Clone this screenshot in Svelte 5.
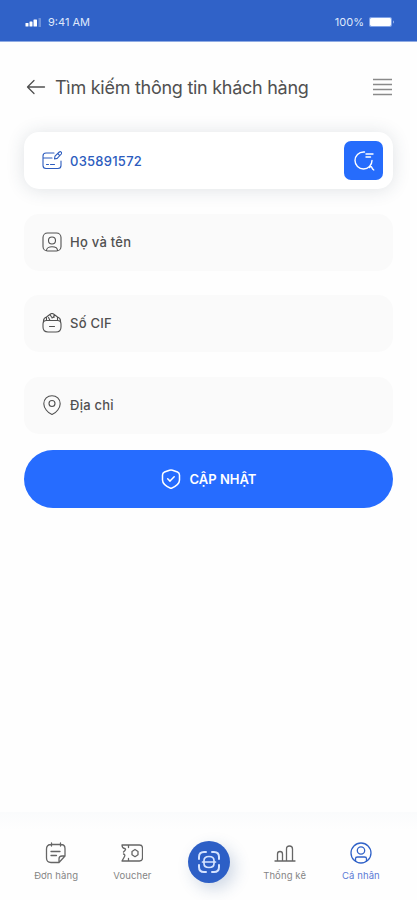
<script>
    let phone = '035891572';

    const fields = [
        { icon: 'user', label: 'Họ và tên' },
        { icon: 'bag', label: 'Số CIF' },
        { icon: 'pin', label: 'Địa chỉ' }
    ];

    const tabs = [
        { icon: 'order', label: 'Đơn hàng' },
        { icon: 'voucher', label: 'Voucher' },
        { icon: 'scan', label: '' },
        { icon: 'stats', label: 'Thống kê' },
        { icon: 'profile', label: 'Cá nhân', active: true }
    ];
</script>

<div class="screen">
    <div class="status-bar">
        <svg class="signal" viewBox="0 0 17 9">
            <rect x="0.5" y="5" width="3" height="3.5" rx="0.6" />
            <rect x="4.5" y="3.5" width="3" height="5" rx="0.6" />
            <rect x="8.5" y="1.5" width="3.5" height="7" rx="0.6" />
            <rect x="13.5" y="0" width="2.5" height="9" rx="0.6" opacity="0.3" />
        </svg>
        <span class="time">9:41 AM</span>
        <span class="percent">100%</span>
        <svg class="battery" viewBox="0 0 26 10">
            <rect x="0.5" y="0.5" width="22" height="9" rx="2" fill="#fff" stroke="#7fa2e8" />
            <path d="M24 3.5c1.200.4 1.200 2.600 0 3z" fill="#9db8ee" stroke="none" />
        </svg>
    </div>

    <header class="title-row">
        <svg class="back" viewBox="0 0 20 16">
            <path d="M18.500 8H2M8 1.500L1.500 8 8 14.500" />
        </svg>
        <h1>Tìm kiếm thông tin khách hàng</h1>
        <svg class="menu" viewBox="0 0 19 18">
            <path d="M0 1.500h19M0 6.500h19M0 11.500h19M0 16.500h19" />
        </svg>
    </header>

    <main>
        <div class="field search">
            <svg class="icon" viewBox="0 0 20 20">
                <path d="M12 2H4Q1 2 1 5v9.500q0 3 3 3h12q3 0 3-3V10M1 7h9M4.500 13.500h2M8.500 13.500h4" />
                <path d="M12.500 8l.5-2.800 4.300-4.200q1-.8 1.900.1t.1 1.900L15.200 7.400zM15.800 2.600l2 2" />
            </svg>
            <span class="text">{phone}</span>
            <button class="search-btn" aria-label="search">
                <svg viewBox="0 0 22 22">
                    <path d="M10.500 2A8.500 8.500 0 1 0 19 10.500M10.500 2h1M13 4h7M13 7h4.500" />
                    <path d="M16.500 17.500q1.500-2 2.500.2.400 1.500 1.800 2.300" />
                </svg>
            </button>
        </div>

        {#each fields as field}
            <div class="field">
                <svg class="icon" viewBox="0 0 20 20">
                    {#if field.icon === 'user'}
                        <rect x="1" y="1" width="18" height="18" rx="4.500" />
                        <circle cx="10" cy="8.500" r="3.500" />
                        <path d="M4.500 18.500c0-5 11-5 11 0" />
                    {:else if field.icon === 'bag'}
                        <path d="M4.500 7.500h11q3.500 0 3.500 3.500v3q0 5-5 5H6q-5 0-5-5v-3Q1 7.500 4.500 7.500zM7.500 13.500h5" />
                        <path d="M1.500 9q-.4-4 3-5L8.500 1q1.500-1 3 0l4 3q3.400 1 3 5M4.500 4.500v3M8 1.500L9.500 4M6.500 4.500l1.500 3M15.500 4.500v3M12 2v2.500M10 5l2-1.500" />
                    {:else}
                        <path d="M10 19.500C5.500 18 1.800 12.500 1.800 8.700 1.800 4 5.500.7 10 .7s8.200 3.300 8.200 8c0 3.800-3.700 9.300-8.200 10.800z" />
                        <circle cx="10" cy="8.500" r="3" />
                    {/if}
                </svg>
                <span class="text">{field.label}</span>
            </div>
        {/each}

        <button class="submit">
            <svg viewBox="0 0 20 20">
                <path d="M8.500 1.200L3.500 3Q1.500 3.800 1.500 6v5c0 4 5 7 8.500 8.500 3.500-1.500 8.500-4.500 8.500-8.500V6q0-2.200-2-3l-5-1.800q-1.500-.5-3 0z" />
                <path d="M6.700 9.800l2.300 2.300 4.200-4.300" />
            </svg>
            <span>CẬP NHẬT</span>
        </button>
    </main>

    <nav>
        {#each tabs as tab}
            {#if tab.icon === 'scan'}
                <button class="scan" aria-label="scan">
                    <svg viewBox="0 0 22 22">
                        <path class="corner" d="M1 8V6q0-5 5-5h2M14 1h2q5 0 5 5v2M21 14v2q0 5-5 5h-2M8 21H6q-5 0-5-5v-2" />
                        <path d="M6 9.500Q6 5.500 11 5.500t5 4v3q0 4-5 4t-5-4zM4.500 11h13" />
                    </svg>
                </button>
            {:else}
                <div class="tab" class:active={tab.active}>
                    <svg viewBox="0 0 22 22">
                        {#if tab.icon === 'order'}
                            <path d="M6 2.500h10q4 0 4 4V14l-6 6.500H6q-4.500 0-4.500-4.500V7Q1.500 2.500 6 2.500zM6.500 1v3M15.500 1v3M20 14h-3q-3 0-3 3v3.500M6 9.500h9M6 13.500h5.500" />
                        {:else if tab.icon === 'voucher'}
                            <path d="M1 3h17.500q3 0 3 3v10q0 3-3 3H1M1 3q0 3 2.500 3.500T2.500 10M2.500 12q2 .5 1 2.500T1 19M7.500 3v2.500M7.500 16.500V19" />
                            <path d="M11 9.500l3-2 3 2v3.200l-3 2-3-2z" />
                        {:else if tab.icon === 'stats'}
                            <path d="M1 19h20M3.500 19v-7q0-2.500 2.500-2.500T8.500 12v7M12.500 19V7q0-3 3-3t3 3v12" />
                        {:else}
                            <circle cx="11" cy="11" r="10" />
                            <circle cx="11" cy="8.500" r="3.700" />
                            <path d="M5.500 19v-2.500q0-1.500 2-1.500h7q2 0 2 1.500V19" />
                        {/if}
                    </svg>
                    <span>{tab.label}</span>
                </div>
            {/if}
        {/each}
    </nav>
</div>

<style>
    :global(body) {
        background: #fefefe;
    }

    .screen {
        display: flex;
        flex-direction: column;
        height: 900px;
        font-family: "Inter", "Noto Sans", sans-serif;
        color: #505050;
        background-color: #fefefe;
        overflow: hidden;
    }

    svg {
        display: block;
        flex: none;
        fill: none;
        stroke: currentColor;
        stroke-width: 1.1;
        stroke-linecap: round;
        stroke-linejoin: round;
    }

    button {
        border: none;
        padding: 0;
        font-family: inherit;
        color: #fff;
    }

    .status-bar {
        display: flex;
        align-items: center;
        box-sizing: border-box;
        height: 42px;
        padding: 3px 22px 0 25px;
        background-color: #3062c8;
        border-bottom: 1px solid #8fabe3;
        color: #dfe8fb;
        font-size: 11px;
    }

    .signal {
        width: 17px;
        height: 9px;
        fill: #fff;
        stroke: none;
    }

    .time {
        margin-left: 6px;
    }

    .percent {
        margin-left: auto;
    }

    .battery {
        width: 26px;
        height: 10px;
        margin-left: 5px;
    }

    .title-row {
        display: flex;
        align-items: center;
        height: 90px;
        padding: 0 25px 0 26px;
    }

    .back {
        width: 20px;
        height: 16px;
        stroke-width: 1.3;
    }

    h1 {
        flex: 1;
        margin: 0 0 0 9px;
        font-size: 18px;
        font-weight: 400;
        letter-spacing: -0.27px;
        white-space: nowrap;
    }

    .menu {
        width: 19px;
        height: 18px;
        stroke: #8a8a8a;
        stroke-width: 1.4;
        stroke-linecap: butt;
    }

    main {
        display: flex;
        flex-direction: column;
        flex: 1;
        padding: 0 24px;
    }

    .field {
        display: flex;
        align-items: center;
        box-sizing: border-box;
        height: 57px;
        margin-bottom: 24.5px;
        padding: 0 10px 1px 18px;
        border-radius: 15px;
        background-color: #fafafa;
        font-size: 13px;
        font-weight: 500;
        letter-spacing: 0.25px;
    }

    .search {
        padding-bottom: 0;
        background-color: #fff;
        color: #2c5cbe;
        box-shadow: 0 1px 18px rgba(45, 65, 90, 0.15);
    }

    .icon {
        width: 20px;
        height: 20px;
    }

    .text {
        flex: 1;
        margin-left: 8px;
    }

    .search-btn {
        display: flex;
        align-items: center;
        justify-content: center;
        width: 39px;
        height: 39px;
        border-radius: 7px;
        background-color: #266cfc;
    }

    .search-btn svg {
        width: 22px;
        height: 22px;
        stroke-width: 1.4;
    }

    .submit {
        display: flex;
        align-items: center;
        justify-content: center;
        height: 58px;
        margin-top: -8px;
        border-radius: 29px;
        background-color: #266cff;
        font-size: 13px;
        font-weight: 600;
    }

    .submit svg {
        width: 20px;
        height: 20px;
        margin-right: 9px;
        stroke-width: 1.5;
    }

    nav {
        display: flex;
        box-sizing: border-box;
        height: 88px;
        padding: 30px 18px 0;
        background: linear-gradient(#fafbfc, #fefefe 18px);
    }

    .tab {
        display: flex;
        flex-direction: column;
        align-items: center;
        flex: 1;
        font-size: 9.5px;
        letter-spacing: 0.1px;
        color: #858585;
        white-space: nowrap;
    }

    .tab svg {
        width: 22px;
        height: 22px;
        margin-bottom: 6px;
        stroke: #666;
        stroke-width: 1.3;
    }

    .tab.active {
        color: #5b7ad6;
    }

    .tab.active svg {
        stroke: #3062c8;
    }

    .scan {
        display: flex;
        align-items: center;
        justify-content: center;
        flex: none;
        width: 42px;
        height: 42px;
        margin: -1px 17px 0;
        border-radius: 50%;
        background-color: #2d5fc6;
        box-shadow: 5px 6px 16px rgba(40, 80, 140, 0.22);
        color: #d5e3ff;
    }

    .scan svg {
        width: 22px;
        height: 22px;
        stroke-width: 1.7;
    }

    .corner {
        stroke-width: 2;
    }
</style>
